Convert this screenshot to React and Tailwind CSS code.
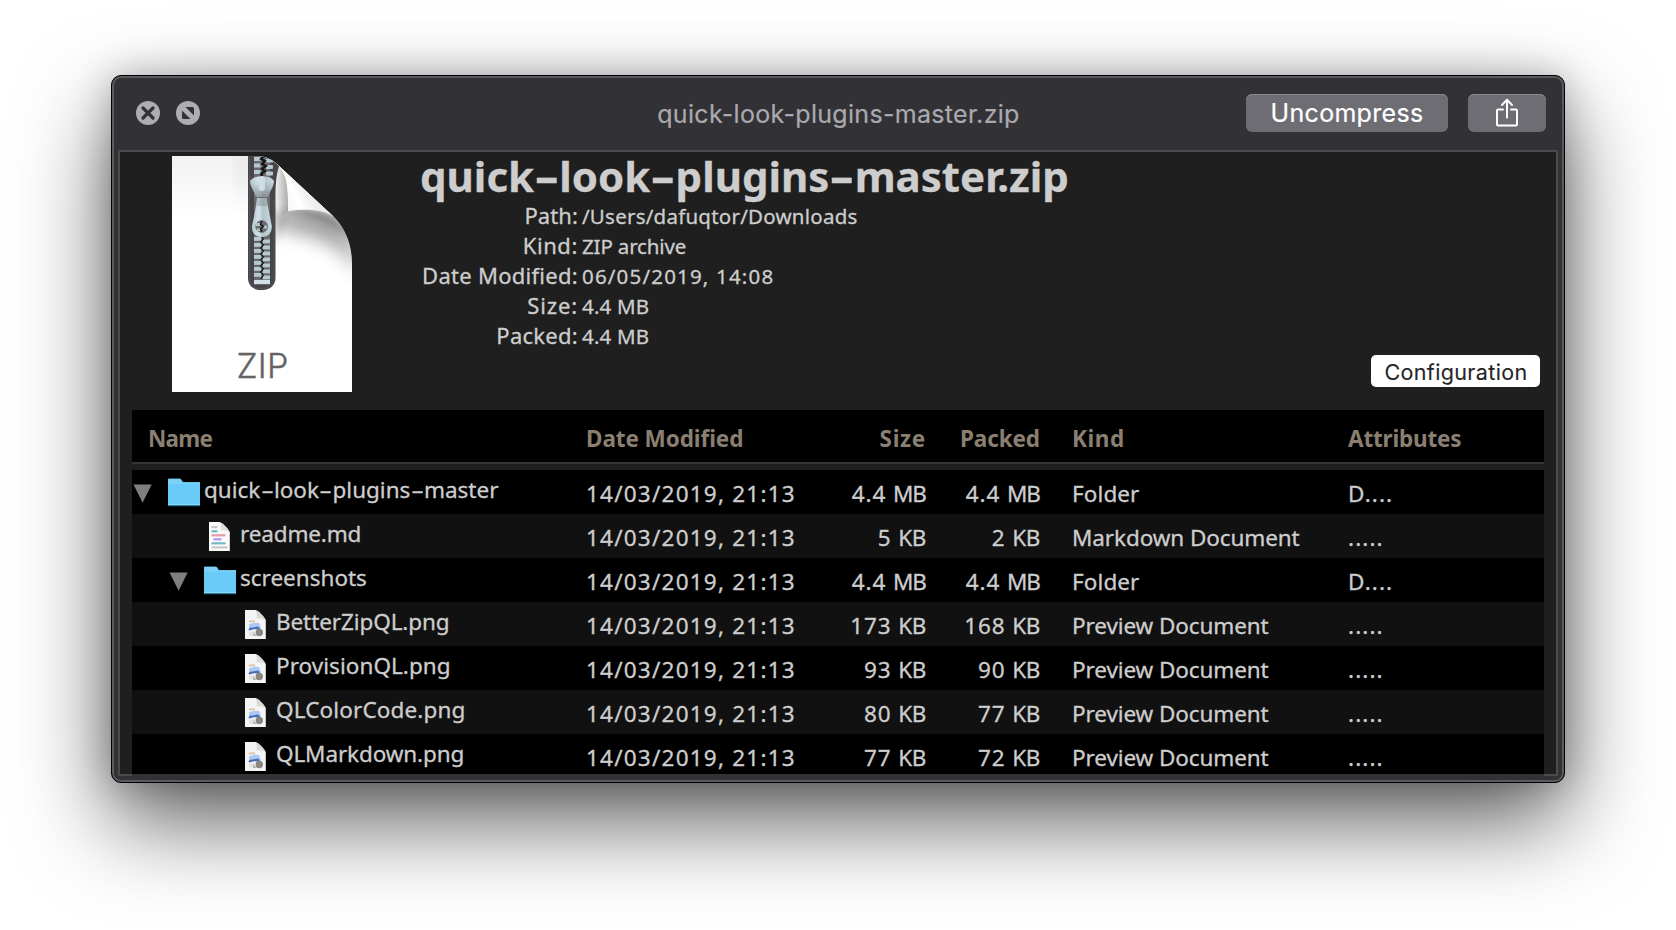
import { Fragment } from 'react';

const columns =
  'grid grid-cols-[454px_222px_118px_114px_307px_197px] items-center whitespace-nowrap';

const info = [
  { label: 'Path:', value: '/Users/dafuqtor/Downloads', lt: 'tracking-[0.1px]', vt: 'tracking-[0.24px]' },
  { label: 'Kind:', value: 'ZIP archive', lt: 'tracking-[0.6px]', vt: 'tracking-[-0.15px]' },
  { label: 'Date Modified:', value: '06/05/2019, 14:08', lt: 'tracking-[0.28px]', vt: 'tracking-[1.18px]' },
  { label: 'Size:', value: '4.4 MB', lt: 'tracking-[0.85px]', vt: 'tracking-[0.2px]' },
  { label: 'Packed:', value: '4.4 MB', lt: 'tracking-[0.27px]', vt: 'tracking-[0.2px]' },
];

const rows = [
  { name: 'quick-look-plugins-master', icon: 'folder', pad: 'pl-0', size: '4.4 MB', packed: '4.4 MB', kind: 'Folder', attrs: 'D....' },
  { name: 'readme.md', icon: 'markdown', pad: 'pl-[36px]', tracking: 'tracking-[-0.15px]', size: '5 KB', packed: '2 KB', kind: 'Markdown Document', attrs: '.....' },
  { name: 'screenshots', icon: 'folder', pad: 'pl-[36px]', size: '4.4 MB', packed: '4.4 MB', kind: 'Folder', attrs: 'D....' },
  { name: 'BetterZipQL.png', icon: 'image', pad: 'pl-[72px]', tracking: 'tracking-[-0.1px]', size: '173 KB', packed: '168 KB', kind: 'Preview Document', attrs: '.....' },
  { name: 'ProvisionQL.png', icon: 'image', pad: 'pl-[72px]', tracking: 'tracking-[0.05px]', size: '93 KB', packed: '90 KB', kind: 'Preview Document', attrs: '.....' },
  { name: 'QLColorCode.png', icon: 'image', pad: 'pl-[72px]', tracking: 'tracking-[0.14px]', size: '80 KB', packed: '77 KB', kind: 'Preview Document', attrs: '.....' },
  { name: 'QLMarkdown.png', icon: 'image', pad: 'pl-[72px]', tracking: 'tracking-[-0.12px]', size: '77 KB', packed: '72 KB', kind: 'Preview Document', attrs: '.....' },
];

/* Text whose hyphens are drawn wide, as in Lucida-style faces. */
function WideHyphens({ text }) {
  return text.split('-').map((part, i) => (
    <Fragment key={i}>
      {i > 0 && <span className="mx-[0.14em] inline-block scale-x-[1.75]">-</span>}
      {part}
    </Fragment>
  ));
}

function Amount({ text }) {
  const [number, unit] = text.split(' ');
  return (
    <span className="text-right">
      <span className="tracking-[0.9px]">{number} </span>
      <span className={unit === 'MB' ? 'tracking-[-1px]' : 'tracking-[-0.4px]'}>{unit}</span>
    </span>
  );
}

const leftTeeth = [81, 87, 93, 99, 105, 111, 117];

function ZipIcon() {
  return (
    <svg width="180" height="236" viewBox="0 0 180 236" className="block shrink-0">
      <defs>
        <clipPath id="page">
          <path d="M0 0H84C93 0 100 3 107 10L162 61C173 72 180 88 180 108V236H0Z" />
        </clipPath>
        <linearGradient id="topShade" x1="0" y1="0" x2="0" y2="1">
          <stop offset="0" stopColor="#f2f2f2" />
          <stop offset="1" stopColor="#ffffff" />
        </linearGradient>
        <linearGradient id="curl" x1="112" y1="46" x2="136" y2="34" gradientUnits="userSpaceOnUse">
          <stop offset="0" stopColor="#f6f6f6" />
          <stop offset="0.5" stopColor="#ffffff" />
          <stop offset="1" stopColor="#ededed" />
        </linearGradient>
        <linearGradient id="roll" x1="103" y1="0" x2="117" y2="0" gradientUnits="userSpaceOnUse">
          <stop offset="0" stopColor="#f4f4f4" />
          <stop offset="1" stopColor="#a5a5a5" />
        </linearGradient>
        <linearGradient id="metal" x1="0" y1="0" x2="1" y2="0">
          <stop offset="0" stopColor="#b3c8d0" />
          <stop offset="0.35" stopColor="#d3e2e8" />
          <stop offset="0.55" stopColor="#b4c3c9" />
          <stop offset="1" stopColor="#c6dae1" />
        </linearGradient>
        <linearGradient id="headShade" x1="0" y1="0" x2="0" y2="1">
          <stop offset="0.25" stopColor="#6e7478" stopOpacity="0" />
          <stop offset="1" stopColor="#5d6266" stopOpacity="0.55" />
        </linearGradient>
        <filter id="soft" x="-50%" y="-50%" width="200%" height="200%">
          <feGaussianBlur stdDeviation="10" />
        </filter>
        <filter id="softer" x="-50%" y="-50%" width="200%" height="200%">
          <feGaussianBlur stdDeviation="3" />
        </filter>
      </defs>
      <g clipPath="url(#page)">
        <rect width="180" height="236" fill="#fff" />
        <rect width="180" height="60" fill="url(#topShade)" />
        <path d="M66 -10H80V60L66 30Z" fill="#000" opacity="0.06" filter="url(#soft)" />
        <path d="M104 54C135 53 152 54 162 60C174 70 184 85 192 122C170 84 140 76 104 72Z" fill="#000" opacity="0.42" filter="url(#soft)" />
        <path d="M116 54C135 52 152 54 164 62C172 70 176 76 180 86C165 68 140 60 116 57Z" fill="#000" opacity="0.26" filter="url(#softer)" />
        <path d="M107 9C114 17 116 28 116 55L108 62C103 50 102 30 103 14Z" fill="url(#roll)" />
        <path d="M104 56L116 52V60L104 90Z" fill="#000" opacity="0.12" filter="url(#softer)" />
        <path d="M106 9C113 17 116 26 116 39V55C136 52 152 54 163 61L168 61L112 6Z" fill="url(#curl)" />
        <path d="M76 0H86C95 1 102 5 107 10C104 20 103.500 30 103.500 42V122C103.500 129 98 134 91 134H89C81 134 76 129 76 122Z" fill="#46464a" />
        <path d="M77.500 0V122C77.500 128 82 132.500 89 132.500H91C97.500 132.500 102 128 102 122V42" fill="none" stroke="#545458" strokeWidth="1" />
        <rect x="82" y="0" width="16" height="124" fill="#6a6a6d" />
        <g fill="#b5c9d1">
          {[1, 7.5, 14].map((y) => (
            <Fragment key={y}>
              <rect x="82" y={y} width="6.500" height="4" />
              <rect x="94" y={y + 1.5} width="7" height="4" rx="1" />
            </Fragment>
          ))}
          {leftTeeth.map((y) => (
            <Fragment key={y}>
              <rect x="82" y={y} width="7.200" height="3.800" />
              <rect x="90.800" y={y + 2.5} width="7.200" height="3.800" />
            </Fragment>
          ))}
          <rect x="82" y="124" width="16" height="4.200" fill="#d2e1e6" />
        </g>
        <path d="M92 0L89 3L93 5L90 8L94 10L90 13L93 15L89 18L91 21" fill="none" stroke="#161617" strokeWidth="2.200" />
        <path
          d="M89 80L91.500 83L88.500 86L91.500 89L88.500 92L91.500 95L88.500 98L91.500 101L88.500 104L91.500 107L88.500 110L91.500 113L88.500 116L91.500 119L89 123"
          fill="none"
          stroke="#161617"
          strokeWidth="1.100"
        />
        <path d="M78 25C80 22 84 21 86 20.500H94C97 21 100 22 102 25C102 31 97 36 96 41H84C83 36 78 31 78 25Z" fill="url(#metal)" />
        <path d="M78 25C80 22 84 21 86 20.500H94C97 21 100 22 102 25C102 31 97 36 96 41H84C83 36 78 31 78 25Z" fill="url(#headShade)" />
        <rect x="87" y="20" width="6" height="15" rx="3" fill="#cfdde2" />
        <path
          fillRule="evenodd"
          d="M85 42H94.500C96 52 98 60 99.800 70C100 77 96 81 89.700 81C83.500 81 79.500 77 80 70C82 60 84 52 85 42ZM89.700 64.500A6 6 0 1 0 89.700 76.500A6 6 0 1 0 89.700 64.500Z"
          fill="url(#metal)"
        />
        <path d="M85.500 42H94L95.500 50H84.500Z" fill="#54595c" opacity="0.25" />
        <circle cx="89.700" cy="70.500" r="6" fill="none" stroke="#6e777b" strokeWidth="0.800" />
        <path d="M84 67H88V70H84ZM91 69.500H95V72.500H91ZM85 72.500H88V75H85Z" fill="#b5c6cd" />
        <path d="M90 65L88.500 68L91.500 70.500L88.500 73L90 76" fill="none" stroke="#161617" strokeWidth="1.400" />
      </g>
      <text x="64.500" y="221.500" fontFamily="Inter, sans-serif" fontSize="34" fontWeight="300" letterSpacing="0.2" fill="#636363" stroke="#636363" strokeWidth="0.400">
        ZIP
      </text>
    </svg>
  );
}

function FolderIcon() {
  return (
    <svg width="32" height="29" viewBox="0 0 32 29" className="block">
      <path d="M0 1.500Q0 0.500 1 0.500H11.500Q13 0.500 14 2.500L15 4H32V28H0Z" fill="#57b4de" />
      <path d="M0 2Q0 1 1 1H11.500Q12.700 1 13.600 3L14.500 5H0Z" fill="#7fcff2" />
      <rect y="5" width="32" height="22" fill="#69cbf8" />
      <rect y="4.600" width="32" height="0.800" fill="#86d6f9" />
      <rect y="26" width="32" height="1" fill="#8adafc" />
      <rect y="27" width="32" height="1.300" fill="#2a7292" />
    </svg>
  );
}

function MarkdownIcon() {
  return (
    <svg width="21" height="29" viewBox="0 0 21 29" className="block">
      <path d="M0 0H10.500C13 0.500 20 7 20.800 10.500V29H0Z" fill="#fafafa" />
      <path d="M10.500 0.300C12 3 12 6 11.500 8.500C15 8 19 8.500 20.800 11C20 7.500 13.500 0.800 10.500 0.300Z" fill="#dedede" />
      <rect x="2.500" y="4.200" width="6" height="2" fill="#c3c3c3" />
      <rect x="2.500" y="8.200" width="6" height="2.200" fill="#6fb9c6" />
      <rect x="2.500" y="12.200" width="14" height="2.200" fill="#e59ca3" />
      <rect x="4.500" y="16.200" width="8" height="2.200" fill="#b494f5" />
      <rect x="2.500" y="20.200" width="14" height="2.200" fill="#6fb9c6" />
      <rect x="2.500" y="24.400" width="16" height="2" fill="#c3c3c3" />
    </svg>
  );
}

function ImageIcon() {
  return (
    <svg width="21" height="29" viewBox="0 0 21 29" className="block">
      <defs>
        <filter id="photo">
          <feGaussianBlur stdDeviation="0.500" />
        </filter>
      </defs>
      <path d="M0 0H10.500C13 0.500 20 7 20.800 10.500V29H0Z" fill="#f4f4f4" />
      <path d="M10.500 0.300C12 3 12 6 11.500 8.500C15 8 19 8.500 20.800 11C20 7.500 13.500 0.800 10.500 0.300Z" fill="#d9d9d9" />
      <g filter="url(#photo)">
        <rect x="4" y="10.500" width="6" height="1.800" fill="#dcc0a0" />
        <path d="M4 14.500Q9 12 14 13L16 18H4Z" fill="#a9c8f2" />
        <path d="M3.500 19.500Q4 17 8 17.500L13 16.500L16 19.500L9 19.300L4 20.500Z" fill="#4a6cb8" />
        <path d="M4 22L9 20.500L10 25L4 26Z" fill="#dfe3e8" />
        <circle cx="14.300" cy="22.500" r="3.700" fill="#8b8682" />
        <path d="M8 22L12 26H8Z" fill="#b4b4b4" />
      </g>
    </svg>
  );
}

function NameCell({ row }) {
  const folder = row.icon === 'folder';
  return (
    <div className={`flex h-[44px] items-center ${row.pad}`}>
      <div className="flex w-[36px] items-center pl-[1px]">
        {folder && (
          <svg width="19" height="19" viewBox="0 0 19 19" className="mt-[2px]">
            <path d="M0.500 0.500H18.700L9.600 18.700Z" fill="#7f7f7f" />
          </svg>
        )}
      </div>
      <div className={folder ? 'w-[36px]' : 'w-[36px] pl-[5px]'}>
        {row.icon === 'folder' && <FolderIcon />}
        {row.icon === 'markdown' && <MarkdownIcon />}
        {row.icon === 'image' && <ImageIcon />}
      </div>
      <span className={`pb-[4px] ${row.tracking ?? ''}`}>
        <WideHyphens text={row.name} />
      </span>
    </div>
  );
}

export default function App() {
  return (
    <main className="h-[930px] w-[1676px] overflow-hidden bg-white pt-[75px] pl-[111px] font-['Noto_Sans',sans-serif]">
      <section className="flex h-[708px] w-[1454px] flex-col rounded-[10px] border border-black bg-[#323136] shadow-[inset_0_0_0_2px_#5a5a5f,0_38px_90px_rgba(0,0,0,0.64),0_0_36px_rgba(0,0,0,0.22)]">
        <header className="grid h-[74px] shrink-0 grid-cols-[1fr_auto_1fr] items-center pr-[18px] pl-6 font-[Inter,sans-serif] [-webkit-text-stroke:0.2px]">
          <div className="flex gap-4">
            <svg width="24" height="24" viewBox="0 0 24 24">
              <circle cx="12" cy="12" r="12" fill="#aeadb3" />
              <path d="M7 7L17 17M17 7L7 17" stroke="#323136" strokeWidth="3.200" strokeLinecap="round" />
            </svg>
            <svg width="24" height="24" viewBox="0 0 24 24">
              <circle cx="12" cy="12" r="12" fill="#aeadb3" />
              <path d="M9.500 6H16.500Q18 6 18 7.500V14.500ZM6 9.500V16.500Q6 18 7.500 18H14.500Z" fill="#323136" />
            </svg>
          </div>
          <h1 className="pt-[2px] pr-[5px] text-[25px] leading-8 tracking-[0.31px] text-[#aaa9af]">quick-look-plugins-master.zip</h1>
          <div className="flex justify-end gap-5">
            <button className="h-[38px] w-[202px] rounded-[6px] bg-[#6e6d73] text-[25px] leading-none tracking-[0.3px] text-white shadow-[inset_0_1px_0_#8a898f]">
              Uncompress
            </button>
            <button className="flex h-[38px] w-[78px] items-center justify-center rounded-[6px] bg-[#6e6d73] shadow-[inset_0_1px_0_#8a898f]">
              <svg width="24" height="30" viewBox="0 0 24 30" fill="none" stroke="#fff" strokeWidth="2" strokeLinecap="round" strokeLinejoin="round">
                <path d="M8 11.500H3Q2 11.500 2 12.500V26.500Q2 27.500 3 27.500H21Q22 27.500 22 26.500V12.500Q22 11.500 21 11.500H16" />
                <path d="M12 19.500V2M7 7L12 1.700L17 7" />
              </svg>
            </button>
          </div>
        </header>

        <div className="relative mx-[6px] h-[626px] bg-[#1f1f1f] text-[22.5px] text-[#cdcdcd] [-webkit-text-stroke:0.3px] [clip-path:inset(-8px_0_0_0)]">
          <div className="flex h-[260px] pt-[6px] pl-[54px]">
            <ZipIcon />
            <div className="-mt-[5px] ml-[68px] flex-1 whitespace-nowrap">
              <h2 className="h-[49px] text-[42px] leading-[50px] font-bold">
                <WideHyphens text="quick-look-plugins-master.zip" />
              </h2>
              {info.map((item) => (
                <div key={item.label} className="flex h-[30px] items-center leading-[30px]">
                  <span className={`w-[158px] text-right text-[22px] ${item.lt}`}>{item.label}</span>
                  <span className={`pt-[1px] pl-[4px] text-[20.5px] ${item.vt}`}>{item.value}</span>
                </div>
              ))}
            </div>
            <button className="mr-[18px] mb-[23px] h-[32px] w-[169px] self-end rounded-[5px] bg-white pt-[3px] pl-[1px] font-[Inter,sans-serif] text-[21.5px] leading-none tracking-[0.37px] text-[#262626] [-webkit-text-stroke:0.1px]">
              Configuration
            </button>
          </div>

          <div className="mx-[14px]">
            <div className={`${columns} mb-[6px] h-[54px] border-b-2 border-[#363636] bg-black pt-[5px] font-bold text-[#8a7f70] [-webkit-text-stroke:0px]`}>
              <span className="pl-[16px] tracking-[-0.75px]">Name</span>
              <span className="tracking-[-0.08px]">Date Modified</span>
              <span className="text-right tracking-[0.7px]">Size</span>
              <span className="text-right tracking-[-0.1px]">Packed</span>
              <span className="pl-[32px] tracking-[0.6px]">Kind</span>
              <span className="pl-px tracking-[-0.18px]">Attributes</span>
            </div>
            {rows.map((row, i) => (
              <div key={row.name} className={`${columns} h-[44px] ${i % 2 ? 'bg-[#111111]' : 'bg-black'}`}>
                <NameCell row={row} />
                <span className="pt-[4px] tracking-[1.22px]">14/03/2019, 21:13</span>
                <span className="pt-[4px] text-right"><Amount text={row.size} /></span>
                <span className="pt-[4px] text-right"><Amount text={row.packed} /></span>
                <span className={`pt-[4px] pl-[32px] ${row.kind === 'Folder' ? 'tracking-[0.1px]' : 'tracking-[-0.1px]'}`}>{row.kind}</span>
                <span className="pt-[4px] pl-px tracking-[1.1px]">{row.attrs}</span>
              </div>
            ))}
          </div>
          <div className="pointer-events-none absolute inset-0 border-2 border-white/20" />
        </div>
      </section>
    </main>
  );
}
